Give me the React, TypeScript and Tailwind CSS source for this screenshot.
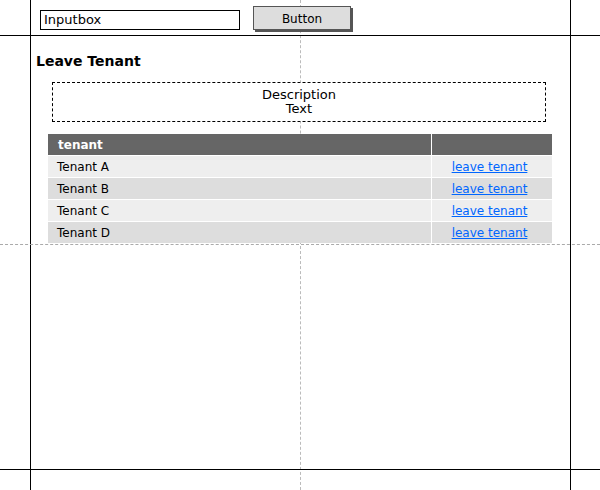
const TENANTS = ["Tenant A", "Tenant B", "Tenant C", "Tenant D"];

export default function App() {
  return (
    <div className="relative flex h-[490px] w-[600px] flex-col overflow-hidden bg-white font-['DejaVu_Sans',sans-serif] text-black">
      {/* wireframe guides, drawn behind the content */}
      <div className="pointer-events-none absolute inset-y-0 left-[30px] w-px bg-black" />
      <div className="pointer-events-none absolute inset-y-0 left-[570px] w-px bg-black" />
      <div className="pointer-events-none absolute inset-y-0 left-[300px] border-l border-dashed border-[#bbb]" />
      <div className="pointer-events-none absolute inset-x-0 top-[244px] border-t border-dashed border-[#aaa]" />

      <header className="relative z-10 flex h-[36px] shrink-0 items-start border-b border-black">
        <div className="ml-[40px] mt-[10px] flex h-[20px] w-[200px] items-center border border-black bg-white px-[3px] text-[13px]">
          Inputbox
        </div>
        <button className="ml-[13px] mt-[6px] h-[24px] w-[98px] border border-[#555] bg-[#ddd] pt-px text-[12px] shadow-[2px_2px_0_#555]">
          Button
        </button>
      </header>

      <main className="relative z-10 flex-1 pl-[36px] pt-[15px]">
        <h1 className="text-[14px] font-bold leading-[20px]">Leave Tenant</h1>

        <div className="ml-[16px] mt-[11px] flex h-[40px] w-[494px] flex-col items-center justify-center border border-dashed border-black bg-white text-[13px] leading-[14px]">
          <span>Description</span>
          <span>Text</span>
        </div>

        <div className="ml-[12px] mt-[12px] grid w-[504px] grid-cols-[383px_120px] gap-px bg-white text-[12px]">
          <div className="flex h-[21px] items-center bg-[#666] pl-[10px] font-bold text-white">tenant</div>
          <div className="h-[21px] bg-[#666]" />
          {TENANTS.map((t, i) => {
            const bg = i % 2 === 0 ? "bg-[#eee]" : "bg-[#ddd]";
            return [
              <div key={t} className={`flex h-[21px] items-center pl-[9px] pt-px ${bg}`}>
                {t}
              </div>,
              <div key={t + "-link"} className={`flex h-[21px] items-center justify-center pr-[5px] pt-px ${bg}`}>
                <a href="#" className="text-[#0066ff] underline">
                  leave tenant
                </a>
              </div>,
            ];
          })}
        </div>
      </main>

      <footer className="relative z-10 h-[21px] shrink-0 border-t border-black" />
    </div>
  );
}
